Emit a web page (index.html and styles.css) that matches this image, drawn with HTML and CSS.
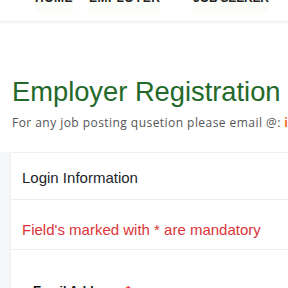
FILE: index.html
```html
<!DOCTYPE html>
<html>
<head>
<meta charset="utf-8">
<link rel="stylesheet" href="styles.css">
</head>
<body>
<nav class="topnav">
  <a class="nav-link home">HOME</a>
  <a class="nav-link employer">EMPLOYER</a>
  <a class="nav-link seeker">JOB SEEKER</a>
</nav>
<header class="page-head">
  <h1 class="title">Employer Registration</h1>
  <p class="subtitle">For any job posting qusetion please email @: <span class="mail">info@jobs.com</span></p>
</header>
<section class="form-area">
  <div class="card">
    <div class="card-header">Login Information</div>
    <div class="card-note">Field's marked with * are mandatory</div>
    <div class="card-body">
      <label class="field-label">Email Address <span class="req">*</span></label>
    </div>
  </div>
</section>
</body>
</html>
```
FILE: styles.css
```css
html, body {
  margin: 0;
  padding: 0;
  background: #ffffff;
  overflow: hidden;
}
body {
  width: 288px;
  height: 288px;
  font-family: "Liberation Sans", Arial, sans-serif;
}
.topnav {
  display: flex;
  margin-top: -19px;
  height: 41px;
  padding: 10px 0 0 35px;
  box-sizing: border-box;
  border-bottom: 1px solid #eeeeee;
  box-shadow: 0 1px 3px rgba(0,0,0,0.04);
}
.nav-link {
  font-size: 12px;
  line-height: 14px;
  font-weight: bold;
  letter-spacing: 0.5px;
  color: #222;
  padding-bottom: 8px;
  background: #fafcf8;
  height: 14px;
}
.employer { margin-left: 16px; }
.seeker { margin-left: 33px; letter-spacing: -0.2px; }
.page-head {
  padding: 0 0 0 12px;
  margin-top: 54px;
  white-space: nowrap;
}
.title {
  margin: 0;
  font-size: 27.3px;
  line-height: 32px;
  font-weight: normal;
  color: #23692a;
}
.subtitle {
  margin: 6px 0 0;
  font-family: "Open Sans", sans-serif;
  font-size: 12px;
  line-height: 18px;
  color: #555;
  letter-spacing: 0.45px;
}
.mail {
  color: #f26a1b;
  font-weight: bold;
}
.form-area {
  margin-top: 20px;
  background: #f4f8fb;
  padding-left: 10px;
}
.card {
  background: #fff;
  border: 1px solid #eef0f2;
  border-right: none;
  height: 200px;
  color: #212529;
}
.card-header {
  font-size: 15px;
  line-height: 21px;
  padding: 14px 11px 11px;
  border-bottom: 1px solid #eeeeee;
}
.card-note {
  font-size: 15px;
  line-height: 21px;
  padding: 19px 11px 9px;
  color: #da3438;
  border-bottom: 1px solid #eeeeee;
}
.card-body {
  padding: 31px 22px 0;
}
.field-label {
  font-size: 12.5px;
  font-weight: bold;
  color: #111;
}
.req {
  color: #e3202a;
  margin-left: 3px;
}
```
